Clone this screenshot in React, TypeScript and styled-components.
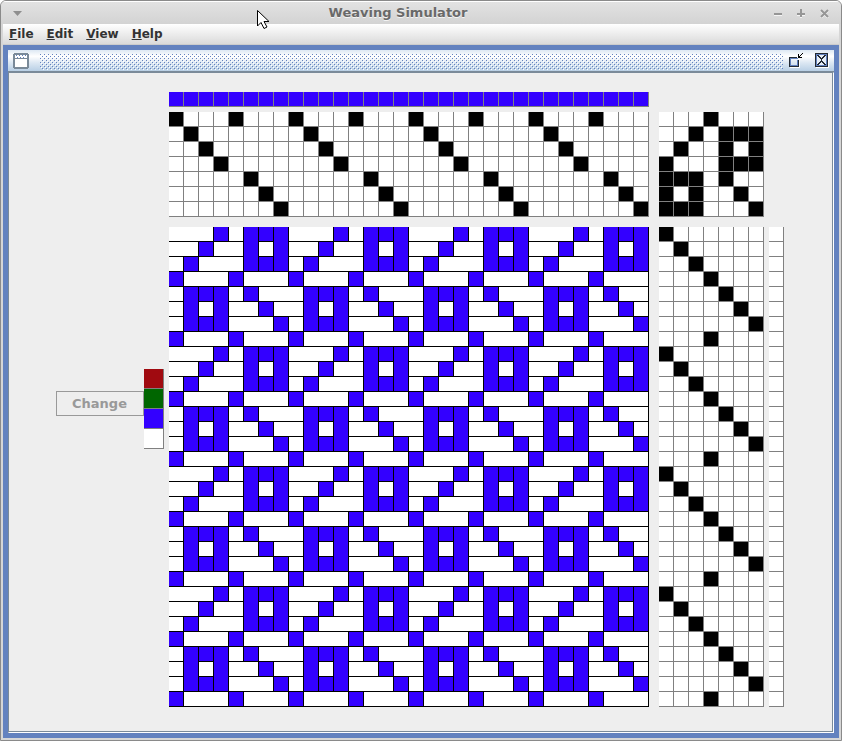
import React from "react";
import styled, { createGlobalStyle, css } from "styled-components";

const GlobalStyle = createGlobalStyle`
  *, *::before, *::after { box-sizing: border-box; }
  html, body, #root { height: 100%; }
  body { margin: 0; background: #ffffff; font-family: "DejaVu Sans", Verdana, sans-serif; }
  button { font: inherit; padding: 0; }
`;

const FRAME_BLUE = "#6382bf";
const LINE = "#7a8a99";
const THREAD = "#3300ff";
const CELL = 15;

const Window = styled.div`
  display: flex;
  flex-direction: column;
  min-height: 100%;
  border: 1px solid #8a8a8a;
  border-radius: 6px 6px 0 0;
  background: #d6d6d6;
  overflow: hidden;
`;

const TitleBar = styled.header`
  display: flex;
  align-items: center;
  height: 23px;
  padding: 0 10px;
  border-top: 1px solid #ffffff;
  background: linear-gradient(#e2e2e2, #d3d3d3);
`;

const Title = styled.h1`
  flex: 1;
  margin: 0;
  text-align: center;
  font-size: 13px;
  line-height: 22px;
  font-weight: bold;
  color: #696969;
  text-shadow: 0 1px 0 #f4f4f4;
`;

const TitleButton = styled.button`
  display: flex;
  align-items: center;
  justify-content: center;
  width: 13px;
  height: 13px;
  border: 0;
  background: none;
`;

const TitleButtons = styled.div`
  display: flex;
  gap: 10px;
`;

const Client = styled.div`
  display: flex;
  flex: 1;
  flex-direction: column;
  padding: 0 2px 2px;
`;

const MenuBar = styled.nav`
  display: flex;
  align-items: center;
  gap: 13px;
  height: 21px;
  padding: 0 6px 1px;
  border-bottom: 1px solid #cccccc;
  background: linear-gradient(#ffffff, #dadada);
`;

const MenuButton = styled.button`
  border: 0;
  background: none;
  font-size: 12px;
  line-height: 18px;
  font-weight: bold;
  color: #333333;

  &::first-letter { text-decoration: underline; }
`;

const InternalFrame = styled.main`
  display: flex;
  flex: 1;
  flex-direction: column;
  padding: 5px;
  background: ${FRAME_BLUE};
`;

const FrameBar = styled.div`
  display: flex;
  align-items: center;
  height: 22px;
  padding: 0 5px;
  border-bottom: 1px solid ${LINE};
  background: linear-gradient(#dde8f3, #ffffff 30%, #dde8f3 60%, #b8cfe5);
`;

const BumpStrip = styled.svg`
  flex: 1;
  align-self: flex-end;
  min-width: 0;
  height: 16px;
  margin: 0 4px 1px 11px;
`;

const FrameButtons = styled.div`
  display: flex;
  gap: 10px;
`;

const FrameButton = styled.button`
  display: flex;
  width: 16px;
  height: 16px;
  border: 0;
  background: none;
`;

const Content = styled.section`
  display: flex;
  flex: 1;
  align-items: center;
  justify-content: center;
  padding: 17px 48px 24px 45px;
  border: 1px solid ${LINE};
  border-right-color: #ffffff;
  border-bottom-color: #ffffff;
  background: #eeeeee;
  box-shadow: inset -1px -1px 0 ${LINE};
`;

const Picker = styled.div`
  display: flex;
  align-items: flex-start;
  margin: 20px 5px 0 0;
`;

const ChangeButton = styled.button`
  width: 88px;
  height: 25px;
  margin-top: 22px;
  border: 1px solid #999999;
  background: #eeeeee;
  color: #999999;
  font-size: 13px;
  font-weight: bold;
`;

const Swatches = styled.div`
  display: grid;
  grid-template-columns: 20px;
  grid-auto-rows: 20px;
`;

const Swatch = styled.button<{ $color: string }>`
  border: 0;
  background: ${(p) => p.$color};
  box-shadow: inset -1px -1px 0 #808080;
`;

const Draft = styled.div`
  display: grid;
  grid-template-columns: auto auto auto;
  grid-template-rows: auto auto auto;
`;

const Cells = styled.div<{ $columns: number; $area: string; $gap: string }>`
  display: grid;
  grid-area: ${(p) => p.$area};
  grid-template-columns: repeat(${(p) => p.$columns}, ${CELL}px);
  grid-auto-rows: ${CELL}px;
  align-content: start;
  margin: ${(p) => p.$gap};
`;

const Square = styled.i<{ $color: string }>`
  background: ${(p) => p.$color};
  box-shadow: inset -1px -1px 0 #808080;
`;

type Edges = { $warp: boolean; $right: boolean; $bottom: boolean };

const Crossing = styled.i<Edges>`
  background: ${(p) => (p.$warp ? THREAD : "#ffffff")};
  ${(p) => css`
    box-shadow:
      inset ${p.$right ? "-1px" : "0"} 0 0 #000000,
      inset 0 ${p.$bottom ? "-1px" : "0"} 0 #000000;
  `}
`;

const ENDS = 32;
const PICKS = 32;
const threading = [0, 1, 2, 3, 0, 4, 5, 6];
const treadling = [0, 1, 2, 3, 4, 5, 6, 3];
const tieUp = [
  "...#...",
  "..#.###",
  ".#..#.#",
  "#...###",
  "###.#..",
  "#.#..#.",
  "###...#",
];

const range = (n: number) => Array.from({ length: n }, (_, i) => i);

const warpUp = (pick: number, end: number) =>
  tieUp[threading[end % 8]][treadling[pick % 8]] === "#";

type GridProps = {
  label: string;
  rows: number;
  columns: number;
  area: string;
  gap?: string;
  color: (row: number, column: number) => string;
};

function SquareGrid({ label, rows, columns, area, gap = "0", color }: GridProps) {
  return (
    <Cells role="img" aria-label={label} $columns={columns} $area={area} $gap={gap}>
      {range(rows * columns).map((i) => (
        <Square key={i} $color={color(Math.floor(i / columns), i % columns)} />
      ))}
    </Cells>
  );
}

function Cloth() {
  return (
    <Cells role="img" aria-label="Cloth" $columns={ENDS} $area="3 / 1" $gap="10px 0 0">
      {range(PICKS * ENDS).map((i) => {
        const pick = Math.floor(i / ENDS);
        const end = i % ENDS;
        const warp = warpUp(pick, end);
        return (
          <Crossing
            key={i}
            $warp={warp}
            $right={warp || end === ENDS - 1 || warpUp(pick, end + 1)}
            $bottom={!warp || pick === PICKS - 1 || !warpUp(pick + 1, end)}
          />
        );
      })}
    </Cells>
  );
}

function Bumps() {
  return (
    <BumpStrip aria-hidden="true" shapeRendering="crispEdges">
      <defs>
        <pattern id="bumps" width="4" height="4" patternUnits="userSpaceOnUse">
          <path d="M1 1h1v1h-1zM3 3h1v1h-1z" fill="#ffffff" />
          <path d="M0 0h1v1h-1zM2 2h1v1h-1z" fill={FRAME_BLUE} />
        </pattern>
      </defs>
      <rect width="100%" height="16" fill="url(#bumps)" />
    </BumpStrip>
  );
}

const ink = (on: boolean) => (on ? "#000000" : "#ffffff");

const Pointer = styled.svg`
  position: absolute;
  left: 256px;
  top: 9px;
  pointer-events: none;
`;

export default function App() {
  return (
    <>
      <GlobalStyle />
      <Window>
        <TitleBar>
          <TitleButton aria-label="Window menu">
            <svg width="9" height="5" viewBox="0 0 9 5">
              <path d="M0 0h9L4.5 5z" fill="#8f8f8f" />
            </svg>
          </TitleButton>
          <Title>Weaving Simulator</Title>
          <TitleButtons>
            <TitleButton aria-label="Minimize">
              <svg width="9" height="9" viewBox="0 0 9 9">
                <path d="M0 6h8v1h-8z" fill="#f4f4f4" />
                <path d="M0 4h8v2h-8z" fill="#969696" />
              </svg>
            </TitleButton>
            <TitleButton aria-label="Maximize">
              <svg width="9" height="9" viewBox="0 0 9 9">
                <path d="M0 6h8v1h-8zM3 8h2v1h-2z" fill="#f4f4f4" />
                <path d="M0 4h8v2h-8zM3 0h2v8h-2z" fill="#969696" />
              </svg>
            </TitleButton>
            <TitleButton aria-label="Close">
              <svg width="9" height="9" viewBox="0 0 9 9">
                <path d="M1 2l7 7M8 2l-7 7" stroke="#f4f4f4" strokeWidth="2" />
                <path d="M1 1l7 7M8 1l-7 7" stroke="#969696" strokeWidth="2" />
              </svg>
            </TitleButton>
          </TitleButtons>
        </TitleBar>
        <Client>
          <MenuBar>
            {["File", "Edit", "View", "Help"].map((name) => (
              <MenuButton key={name}>{name}</MenuButton>
            ))}
          </MenuBar>
          <InternalFrame>
            <FrameBar>
              <FrameButton aria-label="Frame menu">
                <svg width="16" height="16" viewBox="0 0 16 16" shapeRendering="crispEdges">
                  <path d="M1 0h14v1h1v14h-1v1h-14v-1h-1v-14h1z" fill={LINE} />
                  <path d="M2 2h12v3h-12zM2 6h12v8h-12z" fill="#ffffff" />
                  <path
                    d="M3 2h1v1h-1zM6 2h1v1h-1zM9 2h1v1h-1zM12 2h1v1h-1zM4 4h1v1h-1zM7 4h1v1h-1zM10 4h1v1h-1z"
                    fill={FRAME_BLUE}
                  />
                </svg>
              </FrameButton>
              <Bumps />
              <FrameButtons>
                <FrameButton aria-label="Restore">
                  <svg width="16" height="16" viewBox="0 0 16 16" shapeRendering="crispEdges">
                    <path d="M12 6h1v9h-10v-1h9z" fill="#ffffff" />
                    <path d="M3 5h8v1h-7v7h-1zM4 12h6v-5h1v6h-7z" fill={FRAME_BLUE} />
                    <path d="M2 4h8v1h-7v8h8v-6h1v7h-10z" fill="#222a33" />
                    <path
                      d="M11 1h1v3h3v1h-4zM12 3h1v1h-1zM13 2h1v1h-1zM14 1h1v1h-1zM15 0h1v1h-1z"
                      fill="#000000"
                    />
                  </svg>
                </FrameButton>
                <FrameButton aria-label="Close frame">
                  <svg width="16" height="16" viewBox="0 0 16 16" shapeRendering="crispEdges">
                    <path d="M3 14h13v1h-13zM15 1h1v14h-1z" fill="#ffffff" />
                    <path d="M2 0h13v14h-13z" fill="#222a33" />
                    <path d="M3 1h11v12h-11z" fill={FRAME_BLUE} />
                    <path d="M4 2h9v10h-9z" fill="#e6eef7" />
                    <path
                      d="M4 2h2v1h1v1h1v1h1v-1h1v-1h1v-1h2v1h-1v1h-1v1h-1v1h-1v2h1v1h1v1h1v1h1v1h-2v-1h-1v-1h-1v-1h-1v1h-1v1h-1v1h-2v-1h1v-1h1v-1h1v-1h1v-2h-1v-1h-1v-1h-1v-1h-1z"
                      fill="#222a33"
                    />
                  </svg>
                </FrameButton>
              </FrameButtons>
            </FrameBar>
            <Content>
              <Picker>
                <ChangeButton disabled>Change</ChangeButton>
                <Swatches>
                  {["#a00a10", "#006600", THREAD, "#ffffff"].map((color) => (
                    <Swatch key={color} $color={color} aria-label={`Colour ${color}`} />
                  ))}
                </Swatches>
              </Picker>
              <Draft>
                <SquareGrid label="Warp colours" rows={1} columns={ENDS} area="1 / 1" color={() => THREAD} />
                <SquareGrid
                  label="Threading" rows={7} columns={ENDS} area="2 / 1" gap="5px 0 0"
                  color={(row, end) => ink(threading[end % 8] === row)}
                />
                <SquareGrid
                  label="Tie-up" rows={7} columns={7} area="2 / 2" gap="5px 0 0 10px"
                  color={(row, column) => ink(tieUp[row][column] === "#")}
                />
                <Cloth />
                <SquareGrid
                  label="Treadling" rows={PICKS} columns={7} area="3 / 2" gap="10px 0 0 10px"
                  color={(pick, column) => ink(treadling[pick % 8] === column)}
                />
                <SquareGrid
                  label="Weft colours" rows={PICKS} columns={1} area="3 / 3" gap="10px 0 0 5px"
                  color={() => "#ffffff"}
                />
              </Draft>
            </Content>
          </InternalFrame>
        </Client>
      </Window>
      <Pointer width="15" height="22" viewBox="0 0 15 22" aria-hidden="true">
        <path d="M1.5 1.5v15.500l3.500-3.500 3 6 3-1.500-3-5.500h5z" fill="#ffffff" stroke="#000000" />
      </Pointer>
    </>
  );
}
